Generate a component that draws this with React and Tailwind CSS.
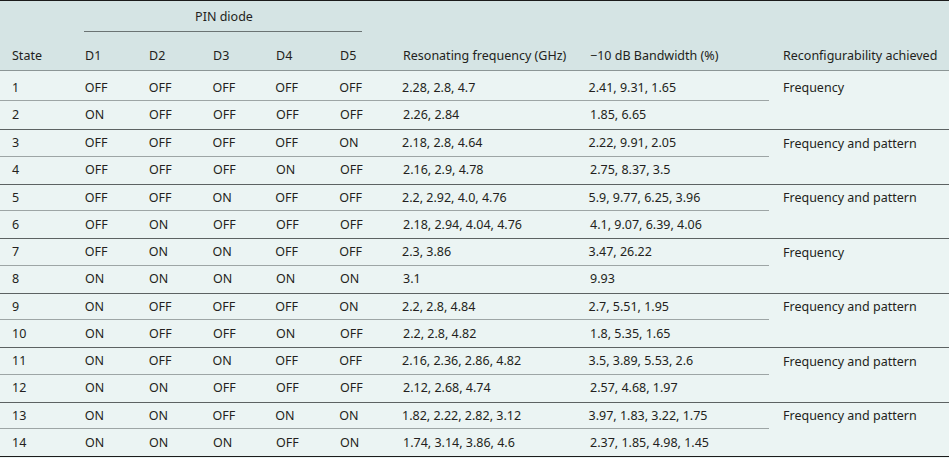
const COLS = 'grid grid-cols-[73px_64px_64px_63px_64px_63px_187px_193px_1fr]'

const GROUPS = [
  {
    label: 'Frequency',
    rows: [
      ['1', 'OFF', 'OFF', 'OFF', 'OFF', 'OFF', '2.28, 2.8, 4.7', '2.41, 9.31, 1.65'],
      ['2', 'ON', 'OFF', 'OFF', 'OFF', 'OFF', '2.26, 2.84', '1.85, 6.65'],
    ],
  },
  {
    label: 'Frequency and pattern',
    rows: [
      ['3', 'OFF', 'OFF', 'OFF', 'OFF', 'ON', '2.18, 2.8, 4.64', '2.22, 9.91, 2.05'],
      ['4', 'OFF', 'OFF', 'OFF', 'ON', 'OFF', '2.16, 2.9, 4.78', '2.75, 8.37, 3.5'],
    ],
  },
  {
    label: 'Frequency and pattern',
    rows: [
      ['5', 'OFF', 'OFF', 'ON', 'OFF', 'OFF', '2.2, 2.92, 4.0, 4.76', '5.9, 9.77, 6.25, 3.96'],
      ['6', 'OFF', 'ON', 'OFF', 'OFF', 'OFF', '2.18, 2.94, 4.04, 4.76', '4.1, 9.07, 6.39, 4.06'],
    ],
  },
  {
    label: 'Frequency',
    rows: [
      ['7', 'OFF', 'ON', 'ON', 'OFF', 'OFF', '2.3, 3.86', '3.47, 26.22'],
      ['8', 'ON', 'ON', 'ON', 'ON', 'ON', '3.1', '9.93'],
    ],
  },
  {
    label: 'Frequency and pattern',
    rows: [
      ['9', 'ON', 'OFF', 'OFF', 'OFF', 'ON', '2.2, 2.8, 4.84', '2.7, 5.51, 1.95'],
      ['10', 'ON', 'OFF', 'OFF', 'ON', 'OFF', '2.2, 2.8, 4.82', '1.8, 5.35, 1.65'],
    ],
  },
  {
    label: 'Frequency and pattern',
    rows: [
      ['11', 'ON', 'OFF', 'ON', 'OFF', 'OFF', '2.16, 2.36, 2.86, 4.82', '3.5, 3.89, 5.53, 2.6'],
      ['12', 'ON', 'ON', 'OFF', 'OFF', 'OFF', '2.12, 2.68, 4.74', '2.57, 4.68, 1.97'],
    ],
  },
  {
    label: 'Frequency and pattern',
    rows: [
      ['13', 'ON', 'ON', 'OFF', 'ON', 'ON', '1.82, 2.22, 2.82, 3.12', '3.97, 1.83, 3.22, 1.75'],
      ['14', 'ON', 'ON', 'ON', 'OFF', 'ON', '1.74, 3.14, 3.86, 4.6', '2.37, 1.85, 4.98, 1.45'],
    ],
  },
]

const HEAD = ['State', 'D1', 'D2', 'D3', 'D4', 'D5', 'Resonating frequency (GHz)', '\u221210 dB Bandwidth (%)', 'Reconfigurability achieved']

function Group({ group, first }) {
  const [top, bottom] = group.rows
  const topH = first ? 'h-[30px] pt-[5px]' : 'h-[26.75px] pt-[1px]'
  return (
    <div className={`${COLS} ${first ? '' : 'border-t border-[#5c6262]'}`}>
      <div className={`col-span-8 flex border-b border-[#9da5a5] mr-[2px] ${topH}`}>
        <Cells row={top} />
      </div>
      <div className={`row-span-2 flex items-start pl-3 ${first ? 'pt-[5px]' : 'pt-[1px]'}`}>
        <div className={`flex items-center ${first ? 'h-[24px]' : 'h-[25.75px]'}`}>{group.label}</div>
      </div>
      <div className={`col-span-8 flex pt-[1px] ${first ? 'h-[28px]' : 'h-[26.75px]'}`}>
        <Cells row={bottom} />
      </div>
    </div>
  )
}

function Cells({ row }) {
  const widths = ['w-[73px]', 'w-[64px]', 'w-[64px]', 'w-[63px]', 'w-[64px]', 'w-[63px]', 'w-[187px]', 'w-[193px]']
  return row.map((v, i) => (
    <div key={i} className={`${widths[i]} flex items-center pl-3`}>
      {v}
    </div>
  ))
}

export default function App() {
  return (
    <div
      className="w-[949px] h-[458px] bg-[#ebf4f3] text-[#231f20] text-[12.5px] overflow-hidden"
      style={{ fontFamily: '"Noto Sans", "Open Sans", sans-serif' }}
    >
      <div className="border-t-[1.5px] border-[#1b1b1b]">
        <div className="bg-[#d5e4e4] h-[70px] border-b border-[#8c9696] flex flex-col">
          <div className="flex h-[40px]">
            <div className="w-[73px]" />
            <div className="w-[290px] flex flex-col">
              <div className="h-[30px] flex items-center justify-center pl-3 pt-[3px]">PIN diode</div>
              <div className="ml-[11px] mr-[1px] border-t border-[#6b7373]" />
            </div>
          </div>
          <div className={`${COLS} flex-1`}>
            {HEAD.map((h) => (
              <div key={h} className="pl-3 flex items-start pt-[6px]">
                {h}
              </div>
            ))}
          </div>
        </div>
        <div className="border-b-[1.5px] border-[#1b1b1b]">
          {GROUPS.map((g, i) => (
            <Group key={i} group={g} first={i === 0} />
          ))}
        </div>
      </div>
    </div>
  )
}
